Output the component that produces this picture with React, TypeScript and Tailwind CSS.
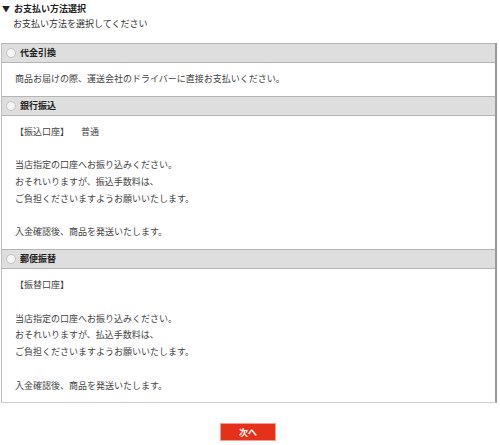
import React from 'react';

const font = { fontFamily: '"Noto Sans CJK JP", "Noto Sans", sans-serif' };

type Method = { id: string; label: string; lines: React.ReactNode[] };

const METHODS: Method[] = [
  { id: 'cod', label: '代金引換', lines: ['商品お届けの際、運送会社のドライバーに直接お支払いください。'] },
  {
    id: 'bank',
    label: '銀行振込',
    lines: [
      <>
        【振込口座】<span className="pl-[12px]">普通</span>
      </>,
      '',
      '当店指定の口座へお振り込みください。',
      'おそれいりますが、振込手数料は、',
      'ご負担くださいますようお願いいたします。',
      '',
      '入金確認後、商品を発送いたします。',
    ],
  },
  {
    id: 'post',
    label: '郵便振替',
    lines: [
      '【振替口座】',
      '',
      '当店指定の口座へお振り込みください。',
      'おそれいりますが、払込手数料は、',
      'ご負担くださいますようお願いいたします。',
      '',
      '入金確認後、商品を発送いたします。',
    ],
  },
];

function MethodBlock({ m }: { m: Method }) {
  return (
    <div>
      <label className="flex h-[20px] items-center gap-[4px] border-y border-[#b4b4b4] bg-[#dedede] pl-[4px] text-[9px] font-bold text-[#222]">
        <span className="h-[10px] w-[10px] rounded-full border border-[#c4c4c4] bg-[#f4f4f4]" />
        {m.label}
      </label>
      <div className="px-[13px] py-[8px] text-[9px] leading-[16.75px] text-[#444]">
        {m.lines.map((l, i) => (
          <p key={i} className="h-[16.75px] whitespace-pre">{l}</p>
        ))}
      </div>
    </div>
  );
}

export default function App() {
  return (
    <div className="h-[445px] w-[500px] bg-white" style={font}>
      <div className="pt-[2px]">
        <h3 className="flex items-center gap-[4px] pl-[2px] text-[9px] font-bold leading-[13px] text-[#222]">
          <span className="text-[8px]">▼</span>お支払い方法選択
        </h3>
        <p className="pl-[13px] pt-[2px] text-[9px] leading-[13px] text-[#333]">お支払い方法を選択してください</p>
      </div>
      <div className="ml-px mt-[13px] w-[496px] border-b border-l border-r-2 border-b-[#cfcfcf] border-l-[#bdbdbd] border-r-[#9a9a9a]">
        {METHODS.map((m) => (
          <MethodBlock key={m.id} m={m} />
        ))}
      </div>
      <div className="flex justify-center pt-[20px]">
        <button className="ml-[-4px] h-[18px] w-[56px] border border-[#f3a08f] bg-[#e6311a] text-[9px] font-bold text-white">
          次へ
        </button>
      </div>
    </div>
  );
}
